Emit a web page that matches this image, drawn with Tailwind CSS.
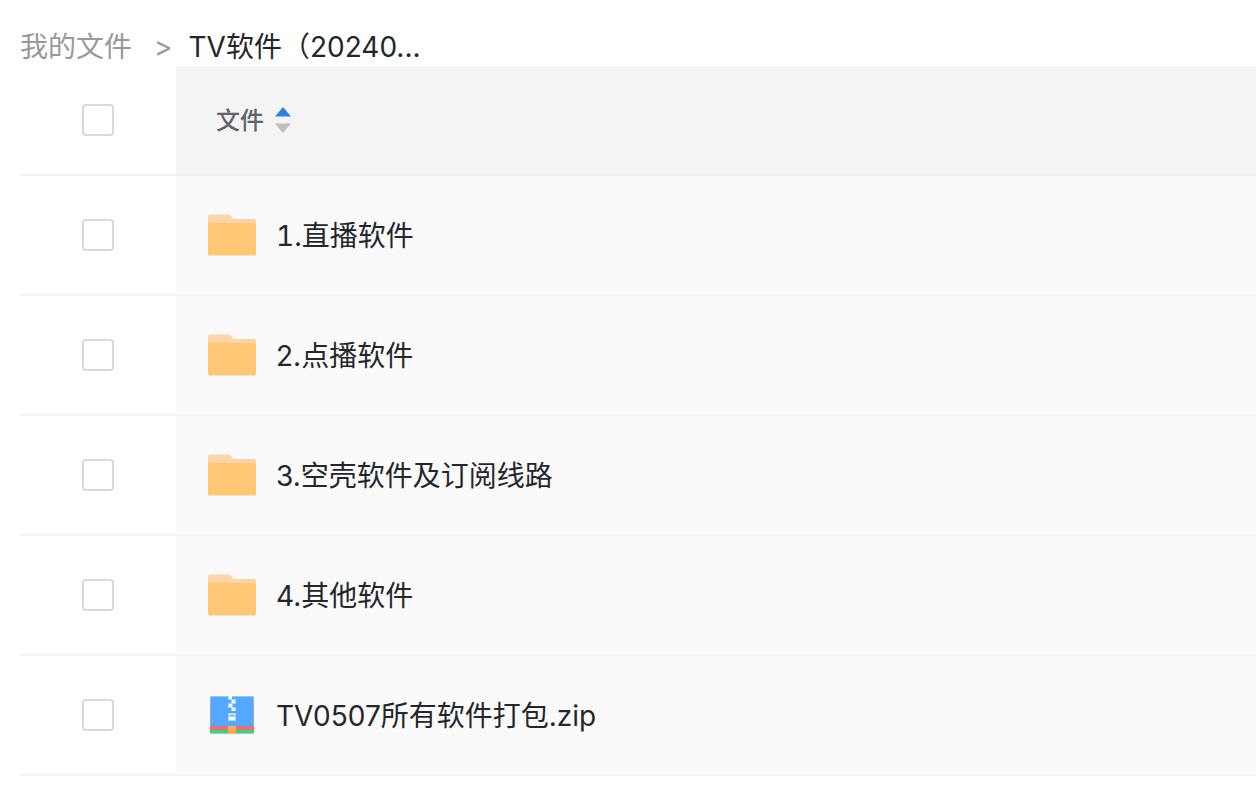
<!DOCTYPE html>
<html lang="zh-CN">
<head>
<meta charset="utf-8">
<meta name="viewport" content="width=device-width, initial-scale=1">
<title>我的文件</title>
<script src="https://cdn.jsdelivr.net/npm/@tailwindcss/browser@4"></script>
</head>
<body class="bg-white pl-5 font-['Inter','Noto_Sans_CJK_SC',sans-serif] text-[28px] leading-10 text-[#25262b]">
<svg class="hidden" aria-hidden="true">
  <symbol id="folder" viewBox="0 0 48 42">
    <path fill="#fbd5a5" d="M0 2.500Q0 .500 2 .500H20Q21.500 .500 22.500 1.500L25.500 5H46Q48 5 48 7V20H0Z"/>
    <path fill="#ffc774" d="M0 11Q0 9 2 9H46Q48 9 48 11V39.500Q48 41.500 46 41.500H2Q0 41.500 0 39.500Z"/>
  </symbol>
</svg>
<nav aria-label="路径" class="flex items-center pt-7 leading-[38px]">
  <a href="#" class="text-[#999999]">我的文件</a>
  <span class="pl-[22px] pr-4 text-[#999999]">&gt;</span>
  <span aria-current="page">TV软件（20240...</span>
</nav>
<table class="w-full border-separate border-spacing-0">
  <thead>
    <tr class="h-[110px]">
      <th class="w-[156px] border-b-2 border-[#f0f0f0] p-0"><input type="checkbox" aria-label="全选" class="mx-auto block size-8 appearance-none rounded border-2 border-[#d9d9d9] bg-white checked:bg-[#2b85e9]"></th>
      <th class="border-b-2 border-[#f0f0f0] bg-[#f4f4f4] p-0 pl-10 text-left font-medium">
        <button type="button" class="flex items-center gap-[11px] text-2xl text-[#636468]"><span class="pt-0.5">文件</span>
          <svg class="h-[26px] w-4" viewBox="0 0 16 26" aria-hidden="true"><path fill="#2b80e5" d="M8 0L16 9.500H0Z"/><path fill="#bfbfbf" d="M0 16.500H16L8 26Z"/></svg>
        </button>
      </th>
    </tr>
  </thead>
  <tbody>
    <tr class="h-[120px]">
      <td class="border-b-2 border-[#f3f3f3] p-0"><input id="f1" type="checkbox" class="mx-auto block size-8 appearance-none rounded border-2 border-[#d9d9d9] bg-white checked:bg-[#2b85e9]"></td>
      <td class="border-b-2 border-[#f3f3f3] bg-[#fafafa] p-0 pl-8"><label for="f1" class="flex items-center gap-5"><svg class="h-[42px] w-12" aria-hidden="true"><use href="#folder"/></svg><span class="pt-0.5 tabular-nums">1.直播软件</span></label></td>
    </tr>
    <tr class="h-[120px]">
      <td class="border-b-2 border-[#f3f3f3] p-0"><input id="f2" type="checkbox" class="mx-auto block size-8 appearance-none rounded border-2 border-[#d9d9d9] bg-white checked:bg-[#2b85e9]"></td>
      <td class="border-b-2 border-[#f3f3f3] bg-[#fafafa] p-0 pl-8"><label for="f2" class="flex items-center gap-5"><svg class="h-[42px] w-12" aria-hidden="true"><use href="#folder"/></svg><span class="pt-0.5">2.点播软件</span></label></td>
    </tr>
    <tr class="h-[120px]">
      <td class="border-b-2 border-[#f3f3f3] p-0"><input id="f3" type="checkbox" class="mx-auto block size-8 appearance-none rounded border-2 border-[#d9d9d9] bg-white checked:bg-[#2b85e9]"></td>
      <td class="border-b-2 border-[#f3f3f3] bg-[#fafafa] p-0 pl-8"><label for="f3" class="flex items-center gap-5"><svg class="h-[42px] w-12" aria-hidden="true"><use href="#folder"/></svg><span class="pt-0.5">3.空壳软件及订阅线路</span></label></td>
    </tr>
    <tr class="h-[120px]">
      <td class="border-b-2 border-[#f3f3f3] p-0"><input id="f4" type="checkbox" class="mx-auto block size-8 appearance-none rounded border-2 border-[#d9d9d9] bg-white checked:bg-[#2b85e9]"></td>
      <td class="border-b-2 border-[#f3f3f3] bg-[#fafafa] p-0 pl-8"><label for="f4" class="flex items-center gap-5"><svg class="h-[42px] w-12" aria-hidden="true"><use href="#folder"/></svg><span class="pt-0.5">4.其他软件</span></label></td>
    </tr>
    <tr class="h-[120px]">
      <td class="border-b-2 border-[#f3f3f3] p-0"><input id="f5" type="checkbox" class="mx-auto block size-8 appearance-none rounded border-2 border-[#d9d9d9] bg-white checked:bg-[#2b85e9]"></td>
      <td class="border-b-2 border-[#f3f3f3] bg-[#fafafa] p-0 pl-8"><label for="f5" class="flex items-center gap-5">
        <svg class="h-[38px] w-12" viewBox="0 0 48 38" shape-rendering="crispEdges" aria-hidden="true">
          <path fill="#98c9fa" d="M2 0H46V4H2Z"/><path fill="#8fabe8" d="M2 4H46V30H2Z"/>
          <path fill="#55a8ff" d="M3 1H45V30H3Z"/>
          <path fill="#f96969" d="M2 30H46V34H2Z"/><path fill="#b9809f" d="M3 30H45V31H3Z"/>
          <path fill="#41cd82" d="M2 34H46V38H2Z"/><path fill="#84dcae" d="M2 37H46V38H2Z"/>
          <path fill="#ffaa54" d="M20 30H28V38H20Z"/>
          <path fill="#a9d3ff" d="M20 0H24V4H20ZM23 3H28V8H23ZM20 7H25V12H20ZM23 11H28V15H23ZM20 17H28V25H20Z"/>
          <path fill="#fff" d="M21 0H24V3H21ZM24 4H27V7H24ZM21 8H24V11H21ZM24 12H27V15H24ZM21 21H27V24H21ZM21 18H27V19H21Z"/>
          <path fill="#55a8ff" d="M22 19H26V20H22Z"/>
        </svg><span class="pt-0.5">TV0507所有软件打包.zip</span></label></td>
    </tr>
  </tbody>
</table>
</body>
</html>
